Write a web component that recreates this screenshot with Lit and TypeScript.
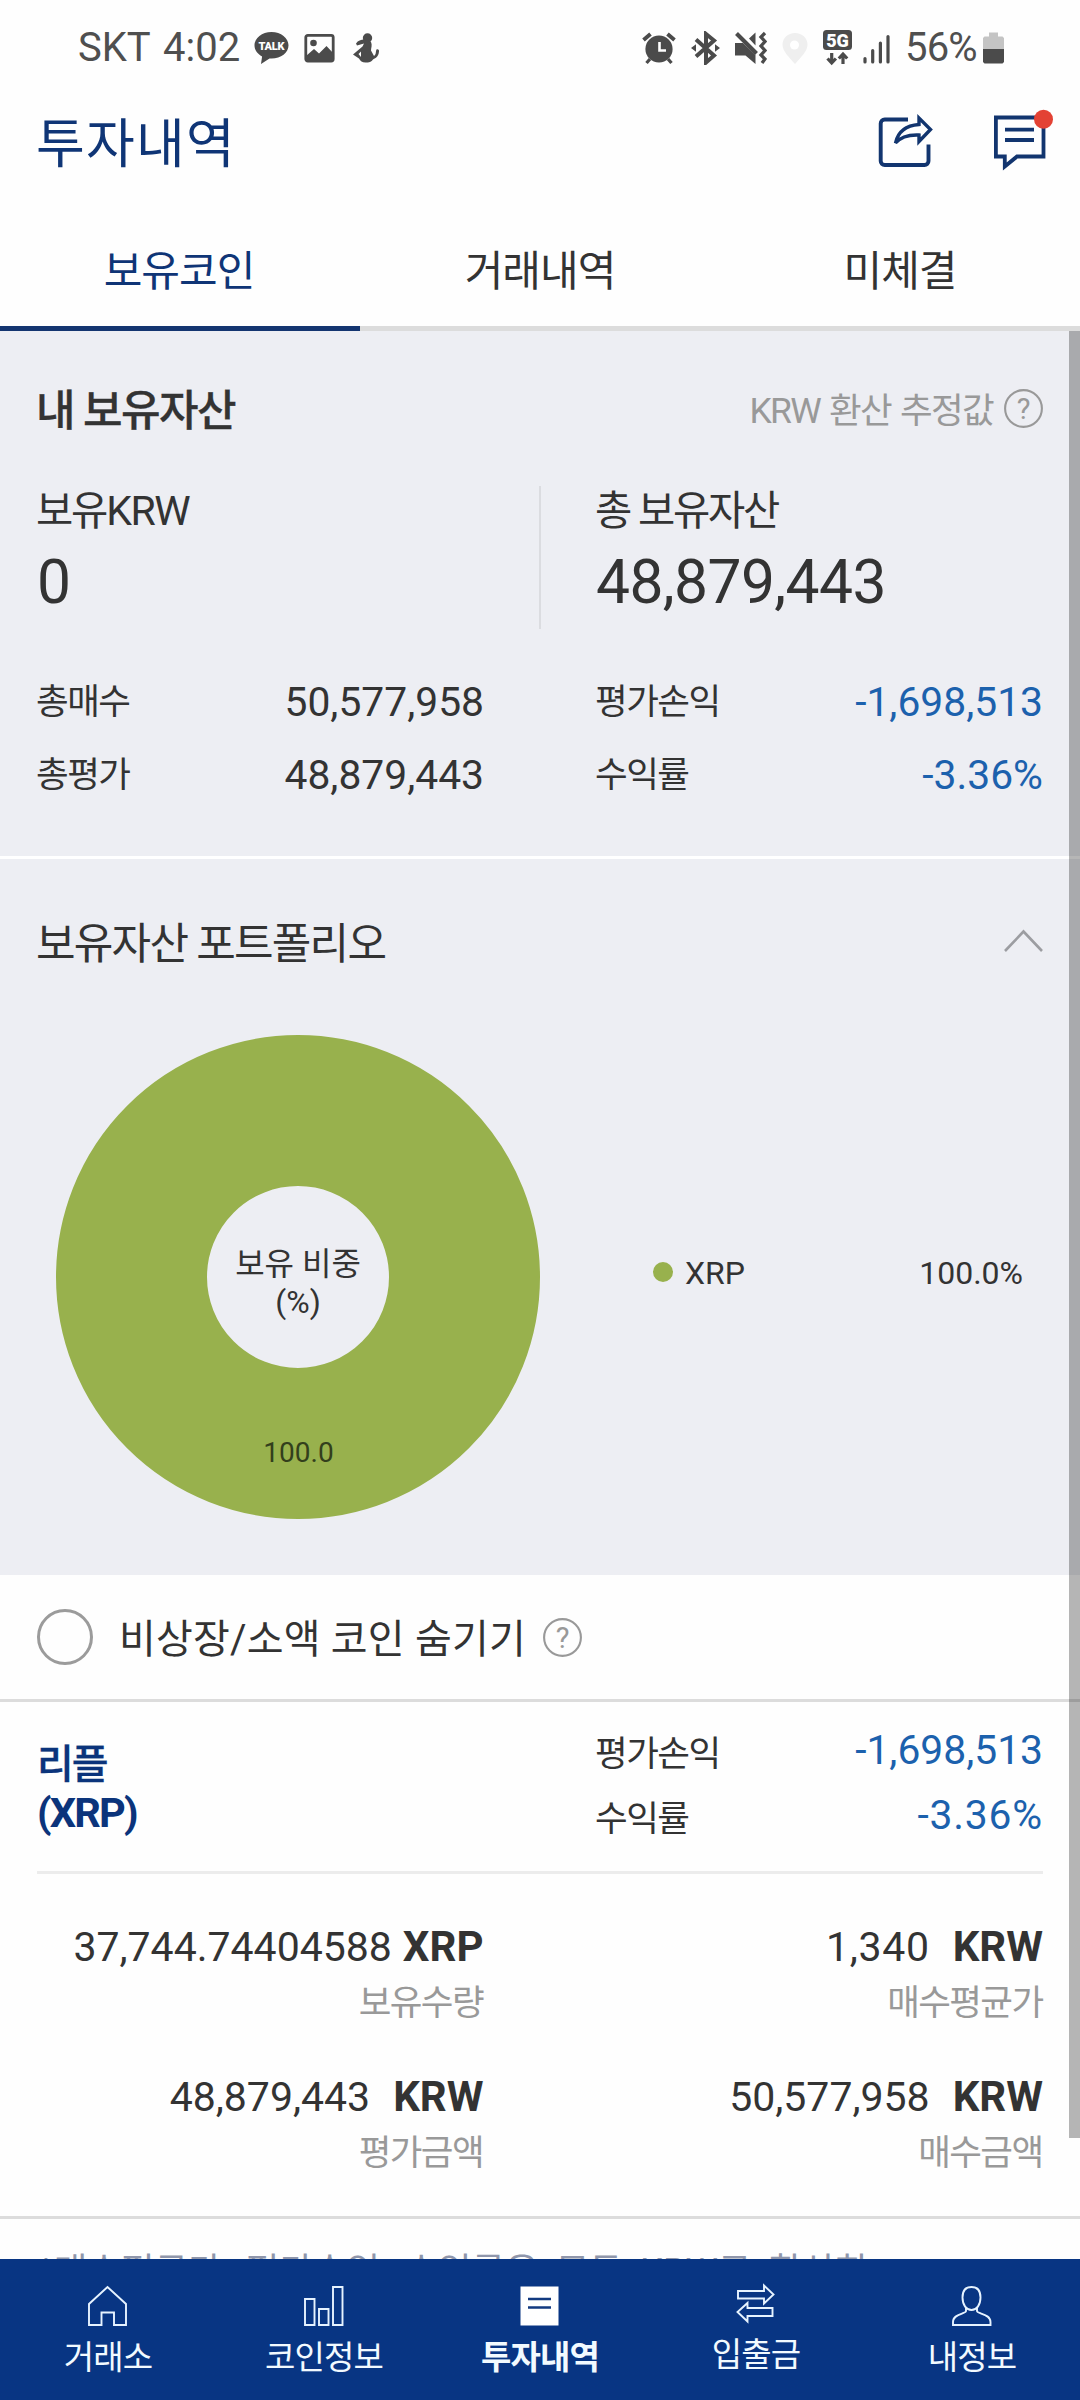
import { LitElement, html, css, svg } from "lit";
import { customElement, property } from "lit/decorators.js";
import { classMap } from "lit/directives/class-map.js";

interface Stat {
  label: string;
  value: string;
  loss?: boolean;
  percent?: boolean;
}

interface Amount {
  value: string;
  unit: string;
  label: string;
  tight?: boolean;
  wide?: boolean;
}

const KRW_STATS: Stat[] = [
  { label: "총매수", value: "50,577,958" },
  { label: "총평가", value: "48,879,443" },
];

const PROFIT_STATS: Stat[] = [
  { label: "평가손익", value: "-1,698,513", loss: true },
  { label: "수익률", value: "-3.36%", loss: true, percent: true },
];

const AMOUNTS: Amount[] = [
  { value: "37,744.74404588", unit: "XRP", label: "보유수량", tight: true },
  { value: "1,340", unit: "KRW", label: "매수평균가", wide: true },
  { value: "48,879,443", unit: "KRW", label: "평가금액" },
  { value: "50,577,958", unit: "KRW", label: "매수금액" },
];

const helpIcon = html`
  <svg class="help" width="39" height="39" viewBox="0 0 39 39">
    <circle cx="19.5" cy="19.5" r="18.4" fill="none" stroke="#999" stroke-width="2.1" />
    <text x="19.5" y="29.5" text-anchor="middle" font-size="29" fill="#999">?</text>
  </svg>
`;

@customElement("status-bar")
export class StatusBar extends LitElement {
  static styles = css`
    :host {
      display: flex;
      align-items: center;
      justify-content: space-between;
      height: 96px;
      padding: 0 76px 0 78px;
      box-sizing: border-box;
      font-size: 40px;
      line-height: 48px;
      color: #4f4f4f;
      flex: none;
    }
    .group {
      display: flex;
      align-items: center;
    }
    svg {
      display: block;
      flex: none;
    }
    .carrier {
      width: 72px;
      margin-right: 13px;
    }
    .clock {
      width: 77px;
      margin-right: 14px;
    }
    .gap {
      margin-right: 15px;
    }
    .photo {
      margin-right: 18px;
    }
    .network {
      margin-right: 11px;
    }
    .percent {
      width: 74px;
      margin: 0 4px 0 15px;
      letter-spacing: -0.8px;
    }
  `;

  render() {
    return html`
      <div class="group">
        <span class="carrier">SKT</span>
        <span class="clock">4:02</span>
        <svg class="gap" width="35" height="34" viewBox="0 0 35 34">
          <path
            fill="#4b4b4b"
            d="M17.5 1C8 1 .5 7 .5 14.3c0 4.800 3 8.800 7.600 11.200L7 33l8.500-5.500c.700.1 1.300.1 2 .1 9.500 0 17-6 17-13.300S27 1 17.500 1z"
          />
          <text x="17.500" y="18.800" text-anchor="middle" font-size="11" font-weight="900" fill="#fff" textLength="26">TALK</text>
        </svg>
        <svg class="photo" width="31" height="34" viewBox="0 0 31 34">
          <rect x="1.800" y="4.300" width="27.400" height="25.800" rx="2" fill="none" stroke="#4b4b4b" stroke-width="2.800" />
          <circle cx="9.500" cy="12" r="3.300" fill="#4b4b4b" />
          <path fill="#4b4b4b" d="M2 25l8-7 5 4.500 7.500-7.500 7 7.500V30H2z" />
        </svg>
        <svg width="27" height="34" viewBox="0 0 27 34">
          <circle cx="14.500" cy="7" r="4.700" fill="#4b4b4b" />
          <path
            fill="#4b4b4b"
            d="M3 12.500C5 9.500 8 8.500 11 8.500L18 11C19.500 14 18 17 18 19.500L21 25C23.500 23.500 22.500 20 23.500 18.500 25 17.500 26.500 19 26 20.500 25.500 26 22 27.500 20 28.500 18.500 31 16 31.500 12.500 31.500 9 31.500 7.500 30 6 27.500L0 23.500 9.500 15.500 11 12.500 4 14.500ZM5.500 23L8 26V20.500Z"
            fill-rule="evenodd"
          />
        </svg>
      </div>
      <div class="group">
        <svg class="gap" width="34" height="34" viewBox="0 0 34 34">
          <g fill="none" stroke="#4b4b4b">
            <path d="M1.500 9L8.500 3M32.500 9L25.500 3" stroke-width="3.900" />
            <path d="M8 28l-3.500 4M26 28l3.500 4" stroke-width="3.300" />
          </g>
          <circle cx="17" cy="18" r="13.600" fill="#4b4b4b" />
          <path d="M17.500 11v8.500h6.500" fill="none" stroke="#fff" stroke-width="2.600" />
        </svg>
        <svg class="gap" width="29" height="34" viewBox="0 0 29 34">
          <path
            d="M5 8.500L23 24.500 15 31.500V3L23 9.500 5 25.500"
            fill="none"
            stroke="#4b4b4b"
            stroke-width="4"
          />
          <path d="M0 17l5-3.800v7.600zM29 17l-5-3.800v7.600z" fill="#4b4b4b" />
        </svg>
        <svg class="gap" width="32" height="34" viewBox="0 0 32 34">
          <path d="M0 12h8l12.500 12v9l-10-8.500H0zM20.500 1.500v13l-6.500-7z" fill="#4b4b4b" />
          <path d="M1.500 2.500l20 20" stroke="#4b4b4b" stroke-width="4" />
          <path
            d="M30 2l-4 4 4 4.500-4 4.500 4 4.500-4 4.500 4 4-3 4"
            fill="none"
            stroke="#4b4b4b"
            stroke-width="3.300"
          />
        </svg>
        <svg class="gap" width="26" height="34" viewBox="0 0 26 34">
          <path d="M13 2C6 2 .500 7 .500 13.700.500 20 7 26 13 33c6-7 12.500-13 12.500-19.300C25.500 7 20 2 13 2z" fill="#efefef" />
          <circle cx="12.500" cy="14" r="4.500" fill="#fff" />
        </svg>
        <svg class="network" width="29" height="38" viewBox="0 0 29 38">
          <rect x="0" y="1" width="29" height="20" rx="3.500" fill="#4b4b4b" />
          <text x="14.500" y="17.500" text-anchor="middle" font-size="18" font-weight="900" fill="#fff">5G</text>
          <path
            d="M8.700 24v9M4.500 29.500l4.200 4.500 4.200-4.500M20 35v-9M15.800 29.500l4.200-4.500 4.200 4.500"
            fill="none"
            stroke="#4b4b4b"
            stroke-width="3.200"
          />
        </svg>
        <svg width="27" height="34" viewBox="0 0 27 34">
          <path
            d="M2 31v-3.500M9.700 31V19.500M17.400 31V12M25 31V5.500"
            stroke="#4b4b4b"
            stroke-width="3.200"
            stroke-linecap="round"
          />
        </svg>
        <span class="percent">56%</span>
        <svg width="21" height="34" viewBox="0 0 21 34">
          <path d="M6 1.500h9v4h4.500l1.500 1.500V19H0V7l1.500-1.500H6z" fill="#c4c4c4" />
          <path d="M0 18h21v13l-1.500 1.500h-18L0 31z" fill="#4b4b4b" />
        </svg>
      </div>
    `;
  }
}

@customElement("stat-rows")
export class StatRows extends LitElement {
  @property({ attribute: false }) rows: Stat[] = [];
  @property({ type: Boolean, reflect: true }) compact = false;

  static styles = css`
    :host {
      display: block;
    }
    .row {
      display: flex;
      justify-content: space-between;
      align-items: center;
      height: 73px;
    }
    :host([compact]) .row {
      height: 65px;
    }
    .label {
      margin-left: -1px;
      font-size: 35.500px;
      line-height: 48px;
      letter-spacing: -1.500px;
    }
    :host([compact]) .label {
      padding-top: 8px;
    }
    .value {
      font-size: 40.800px;
      line-height: 48px;
    }
    .loss {
      color: #1c61ad;
    }
    :host([compact]) .loss.percent {
      letter-spacing: 0.800px;
    }
  `;

  render() {
    return this.rows.map(
      (row) => html`
        <div class="row">
          <span class="label">${row.label}</span>
          <span class=${classMap({ value: true, loss: !!row.loss, percent: !!row.percent })}>${row.value}</span>
        </div>
      `,
    );
  }
}

@customElement("bottom-nav")
export class BottomNav extends LitElement {
  static styles = css`
    :host {
      display: grid;
      grid-template-columns: repeat(5, 1fr);
      height: 141px;
      padding-top: 26px;
      box-sizing: border-box;
      background: #083583;
      color: #f2faff;
      flex: none;
    }
    .item {
      display: flex;
      flex-direction: column;
      align-items: center;
      gap: 8px;
    }
    .raised {
      margin-top: -3px;
    }
    .label {
      font-size: 33px;
      line-height: 46px;
      letter-spacing: -0.900px;
    }
    .active {
      font-weight: 700;
    }
    svg {
      display: block;
      fill: none;
      stroke: #e6f3ff;
      stroke-width: 1.9;
    }
  `;

  private items = [
    {
      label: "거래소",
      icon: svg`<path d="M2 40V19L20.500 2 39 19V40H27V27.500H14.500V40Z"/>`,
    },
    {
      label: "코인정보",
      icon: svg`<path d="M2 14H11.500V40H2ZM16 24H25.500V40H16ZM30 2H39.500V40H30Z"/>`,
    },
    {
      label: "투자내역",
      active: true,
      icon: svg`<path d="M1.500 1.500h38v39h-38z" fill="#fff" stroke="none"/>
        <path d="M9 14h23M9 22.500h23" stroke="#123a80" stroke-width="2.600"/>`,
    },
    {
      label: "입출금",
      raised: true,
      icon: svg`<path d="M3 9H29V3.500L38.500 12.500 29 21.500V16.500H3ZM37.500 26H12.500V21L2.500 30 12.500 39.500V34H37.500Z"/>`,
    },
    {
      label: "내정보",
      icon: svg`<path d="M20.500 2C14.500 2 11.500 6 11.500 12.500 11.500 20 15.500 25 20.500 25S29.500 20 29.500 12.500C29.500 6 26.500 2 20.500 2Z"/>
        <path d="M15 22.500V26C15 29 2 28.500 2 37V40H39.500V37C39.500 28.500 26 29 26 26V22.500"/>`,
    },
  ];

  render() {
    return this.items.map(
      (item) => html`
        <div class=${classMap({ item: true, raised: !!item.raised })}>
          <svg width="42" height="42" viewBox="0 0 42 42">${item.icon}</svg>
          <span class=${classMap({ label: true, active: !!item.active })}>${item.label}</span>
        </div>
      `,
    );
  }
}

@customElement("app-root")
export class AppRoot extends LitElement {
  static styles = css`
    :host {
      display: flex;
      flex-direction: column;
      width: 1080px;
      height: 2400px;
      overflow: hidden;
      background: #fefefe;
      color: #333;
      font-family: Roboto, "Noto Sans CJK KR", sans-serif;
      line-height: 1.2;
      -webkit-font-smoothing: antialiased;
      white-space: nowrap;
    }
    svg {
      display: block;
      flex: none;
    }
    .header {
      display: flex;
      justify-content: space-between;
      height: 96px;
      padding: 0 26px 0 36px;
      flex: none;
      color: #0f3576;
    }
    .title {
      font-size: 53px;
      line-height: 98px;
      letter-spacing: 1.200px;
    }
    .actions {
      display: flex;
      gap: 58px;
      padding-top: 12px;
    }
    .tabs {
      display: grid;
      grid-template-columns: repeat(3, 1fr);
      height: 139px;
      flex: none;
    }
    .tab {
      padding-top: 25px;
      line-height: 109px;
      text-align: center;
      font-size: 42px;
      letter-spacing: -1px;
      border-bottom: 5px solid #dcdcdc;
    }
    .tab.on {
      padding-right: 2px;
      color: #0f3576;
      border-color: #143570;
    }
    .main {
      position: relative;
      flex: 1;
      min-height: 0;
      overflow: hidden;
    }
    .scrollbar {
      position: absolute;
      top: 0;
      right: 0;
      width: 11px;
      height: 1807px;
      background: rgba(0, 0, 0, 0.285);
    }
    .assets {
      padding: 50px 37px 45px;
      background: #edeef3;
      border-bottom: 3px solid #fff;
    }
    .head {
      display: flex;
      justify-content: space-between;
      align-items: center;
      height: 60px;
      line-height: 56px;
    }
    .head-title {
      margin-left: -1px;
      font-size: 43px;
      font-weight: 500;
      letter-spacing: -1.600px;
      -webkit-text-stroke: 0.3px #333;
    }
    .note {
      display: flex;
      align-items: center;
      gap: 11px;
      font-size: 35.500px;
      letter-spacing: -1.700px;
      word-spacing: 2px;
      color: #999;
    }
    .note .help {
      margin-top: -5px;
    }
    .help {
      letter-spacing: 0;
    }
    .pair {
      display: grid;
      grid-template-columns: 1fr 1fr;
      column-gap: 112px;
    }
    .totals {
      display: grid;
      grid-template-columns: 1fr 2px 1fr;
      column-gap: 55px;
      height: 143px;
      margin: 45px 0 36px;
    }
    .rule {
      background: #dbdce0;
    }
    .total-label {
      margin-left: -1px;
      font-size: 40.500px;
      line-height: 50px;
      letter-spacing: -2.200px;
    }
    .latin {
      font-size: 41px;
      letter-spacing: -1.400px;
    }
    .total-value {
      margin-top: 12px;
      font-size: 60.500px;
      line-height: 70px;
      letter-spacing: -0.600px;
    }
    .portfolio {
      padding: 55px 37px 56px;
      background: #edeef3;
    }
    .portfolio-title {
      margin: -1px 0 0 -1px;
      font-size: 43px;
      letter-spacing: -1.750px;
    }
    .chevron {
      margin-top: -7px;
    }
    .chart-row {
      display: flex;
      align-items: center;
      margin-top: 61px;
      padding: 0 20px 0 19px;
    }
    .legend {
      display: flex;
      align-items: center;
      flex: 1;
      margin: 0 0 8px 113px;
      font-size: 32px;
      line-height: 40px;
    }
    .dot {
      width: 20px;
      height: 20px;
      margin: 0 12px 2px 0;
      border-radius: 50%;
      background: #98b14d;
    }
    .share {
      margin-left: auto;
    }
    .filter {
      display: flex;
      align-items: center;
      height: 124px;
      padding: 0 37px;
      border-bottom: 3px solid #dcdcdc;
    }
    .radio {
      width: 56px;
      height: 56px;
      box-sizing: border-box;
      border: 3px solid #9b9b9b;
      border-radius: 50%;
    }
    .filter-label {
      margin: 6px 17px 0 26px;
      font-size: 40px;
      line-height: 50px;
      letter-spacing: 0.200px;
    }
    .coin {
      height: 169px;
      margin: 0 37px;
      border-bottom: 3px solid #ececec;
    }
    .coin-name {
      padding-top: 39px;
      font-size: 41.500px;
      line-height: 48px;
      letter-spacing: -1.800px;
      font-weight: 700;
      color: #0b347b;
    }
    .coin-ko {
      font-size: 40px;
      font-weight: 500;
      letter-spacing: -2px;
      -webkit-text-stroke: 0.3px #0b347b;
    }
    .coin-stats {
      padding-top: 15.500px;
    }
    .amounts {
      row-gap: 38px;
      padding: 45px 37px 35px 36px;
      border-bottom: 3px solid #dcdcdc;
      text-align: right;
    }
    .amount {
      display: flex;
      justify-content: flex-end;
      gap: 23px;
      font-size: 41px;
      line-height: 56px;
    }
    .amount.tight {
      gap: 11px;
    }
    .amount.wide .figure {
      letter-spacing: 0.700px;
    }
    .unit {
      font-size: 42px;
      font-weight: 700;
    }
    .amount-label {
      padding: 1px 0.500px 0 0;
      font-size: 35.500px;
      line-height: 55px;
      letter-spacing: -1.600px;
      color: #999;
    }
    .hint {
      padding: 25.500px 38px;
      font-size: 36.500px;
      line-height: 54px;
      word-spacing: 8px;
      color: #8f96ab;
    }
  `;

  private renderDonut() {
    return html`
      <svg width="484" height="484" viewBox="0 0 484 484">
        <circle cx="242" cy="242" r="166.500" fill="none" stroke="#98b14d" stroke-width="151" />
        <g text-anchor="middle" font-size="32" fill="#333">
          <text x="242" y="239.500">보유 비중</text>
          <text x="242" y="278">(%)</text>
        </g>
        <text x="242.500" y="426.500" text-anchor="middle" font-size="28" fill="#333f1c">100.0</text>
      </svg>
    `;
  }

  render() {
    return html`
      <status-bar></status-bar>
      <div class="header">
        <span class="title">투자내역</span>
        <div class="actions">
          <svg width="57" height="64" viewBox="0 0 57 64" fill="none" stroke="#12356f" stroke-width="3.900">
            <path d="M31 11.500H7.700a4 4 0 0 0-4 4V53a4 4 0 0 0 4 4H47.500a4 4 0 0 0 4-4V36.500" />
            <path
              d="M18.500 35C21 23.500 28 17.500 42 16.500V10L53.500 21.500 42 33.500V27C31 26.500 24 28.500 18.500 35Z"
              stroke-width="3.400"
            />
          </svg>
          <svg width="62" height="64" viewBox="0 0 62 64">
            <g fill="none" stroke="#12356f" stroke-width="3.800">
              <path d="M3.900 9.500H51.500V48.500H25L12.800 58.500V48.500H3.900Z" />
              <path d="M13 21.600H42M13 32H42" />
            </g>
            <circle cx="51.500" cy="11.300" r="9.500" fill="#e34234" />
          </svg>
        </div>
      </div>
      <div class="tabs">
        <span class="tab on">보유코인</span>
        <span class="tab">거래내역</span>
        <span class="tab">미체결</span>
      </div>
      <div class="main">
        <section class="assets">
          <div class="head">
            <span class="head-title">내 보유자산</span>
            <span class="note">KRW 환산 추정값 ${helpIcon}</span>
          </div>
          <div class="totals">
            <div>
              <div class="total-label">보유<span class="latin">KRW</span></div>
              <div class="total-value">0</div>
            </div>
            <div class="rule"></div>
            <div>
              <div class="total-label">총 보유자산</div>
              <div class="total-value">48,879,443</div>
            </div>
          </div>
          <div class="pair">
            <stat-rows .rows=${KRW_STATS}></stat-rows>
            <stat-rows .rows=${PROFIT_STATS}></stat-rows>
          </div>
        </section>
        <section class="portfolio">
          <div class="head">
            <span class="portfolio-title">보유자산 포트폴리오</span>
            <svg class="chevron" width="39" height="30" viewBox="0 0 39 30">
              <path d="M1 25L19.500 5.500 38 25" fill="none" stroke="#9c9da1" stroke-width="2.600" />
            </svg>
          </div>
          <div class="chart-row">
            ${this.renderDonut()}
            <div class="legend">
              <span class="dot"></span>
              <span>XRP</span>
              <span class="share">100.0%</span>
            </div>
          </div>
        </section>
        <div class="filter">
          <span class="radio"></span>
          <span class="filter-label">비상장/소액 코인 숨기기</span>
          ${helpIcon}
        </div>
        <div class="coin pair">
          <div class="coin-name">
            <div class="coin-ko">리플</div>
            <div>(XRP)</div>
          </div>
          <stat-rows class="coin-stats" compact .rows=${PROFIT_STATS}></stat-rows>
        </div>
        <div class="amounts pair">
          ${AMOUNTS.map(
            (a) => html`
              <div>
                <div class=${classMap({ amount: true, tight: !!a.tight, wide: !!a.wide })}>
                  <span class="figure">${a.value}</span><span class="unit">${a.unit}</span>
                </div>
                <div class="amount-label">${a.label}</div>
              </div>
            `,
          )}
        </div>
        <div class="hint">*매수평균가, 평가손익, 수익률은 모두 KRW로 환산한</div>
        <div class="scrollbar"></div>
      </div>
      <bottom-nav></bottom-nav>
    `;
  }
}
